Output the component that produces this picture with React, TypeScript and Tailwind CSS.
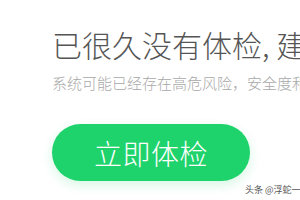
import React from "react";

const App: React.FC = () => {
  return (
    <div
      className="relative w-[300px] h-[200px] overflow-hidden bg-white"
      style={{ fontFamily: '"Noto Sans CJK SC", "Noto Sans", sans-serif' }}
    >
      <div className="pl-[52px] pt-[23px]">
        <h1 className="whitespace-nowrap text-[30px] leading-[42px] font-light text-[#555555]">
          已很久没有体检, 建议立即体检
        </h1>
        <p className="mt-[8px] whitespace-nowrap text-[15px] leading-[20px] font-light text-[#a8a8a8]">
          系统可能已经存在高危风险，安全度和性能都在下降
        </p>
        <button className="mt-[31px] flex items-center justify-center w-[198px] h-[57px] rounded-full bg-[#1ed36b] shadow-[0_4px_12px_rgba(30,211,107,0.18)]">
          <span className="text-[28px] font-light text-white tracking-[0.5px]">
            立即体检
          </span>
        </button>
      </div>
      {/* watermark */}
      <span className="absolute left-[245px] top-[183px] text-[9px] text-[#555555] whitespace-nowrap">
        头条 @浮蛇一
      </span>
    </div>
  );
};

export default App;
